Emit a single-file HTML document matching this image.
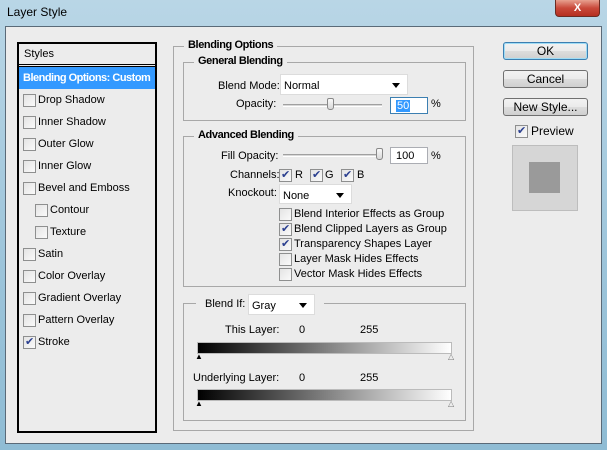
<!DOCTYPE html>
<html><head><style>
*{margin:0;padding:0;box-sizing:border-box}
body{width:607px;height:450px;overflow:hidden;font-family:"Liberation Sans",sans-serif;font-size:11px;color:#000;position:relative;background:linear-gradient(180deg,#b9d6e6 0%,#9cc4da 60%,#8fbcd4 100%)}
.a{position:absolute}
.t{position:absolute;white-space:nowrap}
.client{position:absolute;left:5px;top:26px;width:597px;height:418px;background:#ececec;border:1px solid #5a6a78}
.panel{position:absolute;left:17px;top:42px;width:140px;height:391px;border:2px solid #000;background:#ececec}
.cb{position:absolute;width:13px;height:13px;border:1px solid #8e8f8f;background:linear-gradient(135deg,#e4e4e4,#fafafa)}
.cb.on::after{content:"✔";position:absolute;left:1px;top:-2px;font-size:11px;color:#2a3f8f}
.grp{position:absolute;border:1px solid #a8a8a8}
.lg{position:absolute;background:#ececec;padding:0 4px;font-weight:bold;font-size:11px;top:-8px;letter-spacing:-0.4px}
.sel{position:absolute;background:#fff;border:1px solid #dcdcdc}
.sel::after{content:"";position:absolute;right:7px;top:8px;border:4px solid transparent;border-top:5px solid #000}
.btn{position:absolute;left:503px;width:85px;height:18px;border:1px solid #707070;border-radius:3px;background:linear-gradient(#f2f2f2,#ebebeb 50%,#dddddd 51%,#cfcfcf);text-align:center;line-height:16px;font-size:12px}
.track{position:absolute;height:3px;border-top:1px solid #a0a0a0;border-bottom:1px solid #fff;background:#d8d8d8}
.thumb{position:absolute;width:7px;height:12px;border:1px solid #888;border-radius:2px 2px 3px 3px;background:linear-gradient(#fafafa,#d8d8d8)}
.inp{position:absolute;background:#fff;border:1px solid #abadb3;height:17px;padding:2px 0 0 5px}
.grad{position:absolute;left:197px;width:255px;height:12px;background:linear-gradient(90deg,#000,#fff);border:1px solid #bbb}
</style></head><body>
<div class="t" style="left:7px;top:5px;font-size:12px;color:#000">Layer Style</div>
<div class="a" style="left:555px;top:0;width:45px;height:17px;border:1px solid #6b2b22;border-top:none;border-radius:0 0 4px 4px;background:linear-gradient(#e8a08f,#c9493a 50%,#b52f20);color:#fff;text-align:center;font-weight:bold;font-size:11px;line-height:16px">X</div>
<div class="client"></div>

<div class="panel">
<div class="t" style="left:5px;top:4px">Styles</div>
<div class="a" style="left:0;top:20px;width:136px;height:3px;border-top:1px solid #000;border-bottom:1px solid #000"></div>
<div class="a" style="left:0;top:23px;width:136px;height:22px;background:#3399ff"></div>
<div class="t" style="left:4px;top:28px;color:#fff;font-weight:bold;letter-spacing:-0.5px">Blending Options: Custom</div>
</div>
<div class="cb" style="left:23px;top:94px"></div><div class="t" style="left:38px;top:94px">Drop Shadow</div>
<div class="cb" style="left:23px;top:116px"></div><div class="t" style="left:38px;top:116px">Inner Shadow</div>
<div class="cb" style="left:23px;top:138px"></div><div class="t" style="left:38px;top:138px">Outer Glow</div>
<div class="cb" style="left:23px;top:160px"></div><div class="t" style="left:38px;top:160px">Inner Glow</div>
<div class="cb" style="left:23px;top:182px"></div><div class="t" style="left:38px;top:182px">Bevel and Emboss</div>
<div class="cb" style="left:35px;top:204px"></div><div class="t" style="left:50px;top:204px">Contour</div>
<div class="cb" style="left:35px;top:226px"></div><div class="t" style="left:50px;top:226px">Texture</div>
<div class="cb" style="left:23px;top:248px"></div><div class="t" style="left:38px;top:248px">Satin</div>
<div class="cb" style="left:23px;top:270px"></div><div class="t" style="left:38px;top:270px">Color Overlay</div>
<div class="cb" style="left:23px;top:292px"></div><div class="t" style="left:38px;top:292px">Gradient Overlay</div>
<div class="cb" style="left:23px;top:314px"></div><div class="t" style="left:38px;top:314px">Pattern Overlay</div>
<div class="cb on" style="left:23px;top:336px"></div><div class="t" style="left:38px;top:336px">Stroke</div>

<div class="grp" style="left:173px;top:46px;width:301px;height:385px"><div class="lg" style="left:10px">Blending Options</div></div>
<div class="grp" style="left:183px;top:62px;width:283px;height:59px"><div class="lg" style="left:10px">General Blending</div></div>
<div class="t" style="left:218px;top:80px">Blend Mode:</div>
<div class="sel" style="left:280px;top:74px;width:128px;height:21px"><span class="t" style="left:3px;top:5px">Normal</span></div>
<div class="t" style="left:236px;top:98px">Opacity:</div>
<div class="track" style="left:283px;top:104px;width:99px"></div>
<div class="thumb" style="left:327px;top:98px"></div>
<div class="inp" style="left:390px;top:97px;width:38px;border-color:#3c7fb1"><span style="background:#3399ff;color:#fff;padding:0 1px">50</span></div>
<div class="t" style="left:431px;top:98px">%</div>

<div class="grp" style="left:183px;top:136px;width:283px;height:151px"><div class="lg" style="left:10px">Advanced Blending</div></div>
<div class="t" style="left:221px;top:150px">Fill Opacity:</div>
<div class="track" style="left:283px;top:154px;width:99px"></div>
<div class="thumb" style="left:376px;top:148px"></div>
<div class="inp" style="left:390px;top:147px;width:38px">100</div>
<div class="t" style="left:431px;top:150px">%</div>
<div class="t" style="left:230px;top:169px">Channels:</div>
<div class="cb on" style="left:279px;top:169px"></div><div class="t" style="left:295px;top:169px">R</div>
<div class="cb on" style="left:310px;top:169px"></div><div class="t" style="left:325px;top:169px">G</div>
<div class="cb on" style="left:341px;top:169px"></div><div class="t" style="left:357px;top:169px">B</div>
<div class="t" style="left:228px;top:187px">Knockout:</div>
<div class="sel" style="left:279px;top:184px;width:73px;height:20px"><span class="t" style="left:3px;top:5px">None</span></div>
<div class="cb" style="left:279px;top:208px"></div><div class="t" style="left:294px;top:208px">Blend Interior Effects as Group</div>
<div class="cb on" style="left:279px;top:223px"></div><div class="t" style="left:294px;top:223px">Blend Clipped Layers as Group</div>
<div class="cb on" style="left:279px;top:238px"></div><div class="t" style="left:294px;top:238px">Transparency Shapes Layer</div>
<div class="cb" style="left:279px;top:253px"></div><div class="t" style="left:294px;top:253px">Layer Mask Hides Effects</div>
<div class="cb" style="left:279px;top:268px"></div><div class="t" style="left:294px;top:268px">Vector Mask Hides Effects</div>

<div class="grp" style="left:183px;top:303px;width:283px;height:118px"></div>
<div class="a" style="left:196px;top:295px;width:100px;height:16px;background:#ececec"></div>
<div class="a" style="left:300px;top:295px;width:24px;height:16px;background:#ececec"></div>
<div class="t" style="left:205px;top:298px">Blend If:</div>
<div class="sel" style="left:248px;top:294px;width:67px;height:21px"><span class="t" style="left:3px;top:5px">Gray</span></div>
<div class="t" style="left:225px;top:324px">This Layer:</div>
<div class="t" style="left:299px;top:324px">0</div>
<div class="t" style="left:360px;top:324px">255</div>
<div class="grad" style="top:342px"></div>
<div class="t" style="left:195px;top:352px;font-size:8px">▲</div>
<div class="t" style="left:448px;top:352px;font-size:8px;color:#777">△</div>
<div class="t" style="left:193px;top:372px">Underlying Layer:</div>
<div class="t" style="left:299px;top:372px">0</div>
<div class="t" style="left:360px;top:372px">255</div>
<div class="grad" style="top:389px"></div>
<div class="t" style="left:195px;top:399px;font-size:8px">▲</div>
<div class="t" style="left:448px;top:399px;font-size:8px;color:#777">△</div>

<div class="btn" style="top:42px;border-color:#3c7fb1;box-shadow:0 0 0 1px #9fdcf5 inset">OK</div>
<div class="btn" style="top:70px">Cancel</div>
<div class="btn" style="top:98px">New Style...</div>
<div class="cb on" style="left:515px;top:125px"></div><div class="t" style="left:531px;top:124px;font-size:12px">Preview</div>
<div class="a" style="left:512px;top:145px;width:66px;height:66px;background:#d6d6d6;border:1px solid #bdbdbd"></div>
<div class="a" style="left:529px;top:162px;width:31px;height:31px;background:#9a9a9a"></div>
</body></html>
